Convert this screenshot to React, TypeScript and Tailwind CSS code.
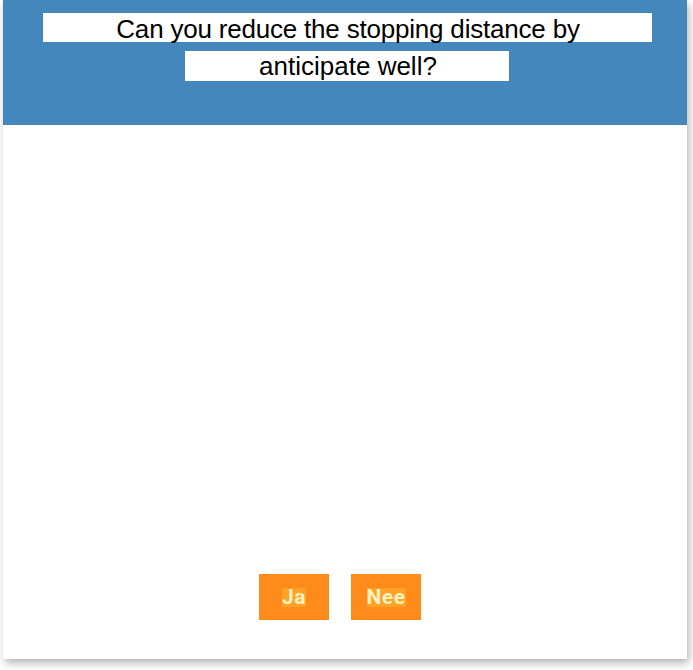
export default function App() {
  return (
    <div className="w-[693px] h-[670px] bg-white">
      <div className="ml-[3px] w-[684px] h-[659px] bg-white flex flex-col shadow-[2px_4px_8px_rgba(0,0,0,0.3)]">
        <div className="h-[125px] bg-[#4487bc] flex flex-col pt-[13px] gap-[9px]" style={{ fontFamily: '"Liberation Sans", Arial, sans-serif' }}>
          <div className="ml-[40px] w-[609px] h-[29px] bg-white text-black text-[26px] leading-[32px] text-center pl-[1px] tracking-[-0.2px] whitespace-nowrap">
            Can you reduce the stopping distance by
          </div>
          <div className="ml-[182px] w-[324px] h-[30px] bg-white text-black text-[26px] leading-[30px] text-center pl-[2px] whitespace-nowrap">
            anticipate well?
          </div>
        </div>
        <div className="flex-1 flex items-end pl-[256px] pb-[39px] gap-[22px]">
          <button className="w-[70px] h-[46px] bg-[#ff8c1a] flex items-center justify-center">
            <span className="bg-[#ffa226] text-[#fff2c2] text-[21px] font-bold leading-[19px] tracking-[0.5px]" style={{ fontFamily: 'Roboto, "Open Sans", sans-serif' }}>Ja</span>
          </button>
          <button className="w-[70px] h-[46px] bg-[#ff8c1a] flex items-center justify-center">
            <span className="bg-[#ffa226] text-[#fff2c2] text-[21px] font-bold leading-[19px] tracking-[0.5px]" style={{ fontFamily: 'Roboto, "Open Sans", sans-serif' }}>Nee</span>
          </button>
        </div>
      </div>
    </div>
  );
}
